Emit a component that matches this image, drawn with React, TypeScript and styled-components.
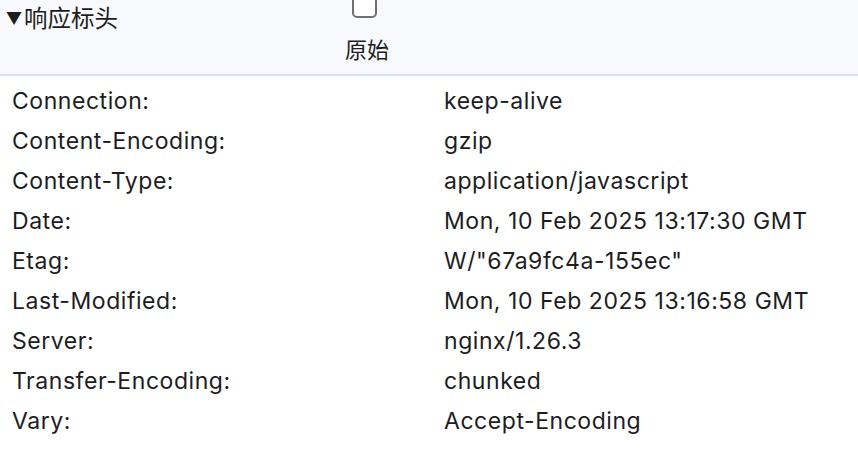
import React from "react";
import styled, { createGlobalStyle } from "styled-components";

const Global = createGlobalStyle`
  html, body { margin: 0; padding: 0; background: #ffffff; }
  body { font-family: Inter, "Noto Sans CJK SC", sans-serif; color: #1d1d1f; }
`;

const Header = styled.div`
  display: flex;
  align-items: flex-start;
  height: 74px;
  background: #f7f9fd;
  border-bottom: 2px solid #d3e2fa;
`;

const Title = styled.div`
  width: 340px;
  padding: 2px 0 0 6px;
  font-size: 23.5px;
  line-height: 30px;
  font-family: "Noto Sans CJK SC", sans-serif;
  color: #1d1d1f;
`;

const Arrow = styled.span`
  font-size: 16px;
  margin-right: 2px;
  vertical-align: 3px;
`;

const RawToggle = styled.label`
  display: flex;
  flex-direction: column;
  align-items: center;
  margin-top: -8px;
  margin-left: -1px;
  gap: 16px;
  font-size: 22px;
  font-family: "Noto Sans CJK SC", sans-serif;
  line-height: 28px;
`;

const Box = styled.span`
  display: block;
  width: 21px;
  height: 22px;
  margin-right: 6px;
  border: 2px solid #707070;
  border-radius: 5px;
  background: #ffffff;
`;

const Rows = styled.div`
  padding-top: 5px;
`;

const Row = styled.div`
  display: grid;
  grid-template-columns: 432px 1fr;
  padding-left: 12px;
  height: 40px;
  align-items: center;
  font-size: 23px;
  letter-spacing: 0.55px;
  line-height: 40px;
  color: #1d1d1f;
`;

const headers: [string, string][] = [
  ["Connection:", "keep-alive"],
  ["Content-Encoding:", "gzip"],
  ["Content-Type:", "application/javascript"],
  ["Date:", "Mon, 10 Feb 2025 13:17:30 GMT"],
  ["Etag:", 'W/"67a9fc4a-155ec"'],
  ["Last-Modified:", "Mon, 10 Feb 2025 13:16:58 GMT"],
  ["Server:", "nginx/1.26.3"],
  ["Transfer-Encoding:", "chunked"],
  ["Vary:", "Accept-Encoding"],
];

export default function App() {
  return (
    <>
      <Global />
      <Header>
        <Title>
          <Arrow>▼</Arrow>响应标头
        </Title>
        <RawToggle>
          <Box />
          原始
        </RawToggle>
      </Header>
      <Rows>
        {headers.map(([k, v]) => (
          <Row key={k}>
            <span>{k}</span>
            <span>{v}</span>
          </Row>
        ))}
      </Rows>
    </>
  );
}
